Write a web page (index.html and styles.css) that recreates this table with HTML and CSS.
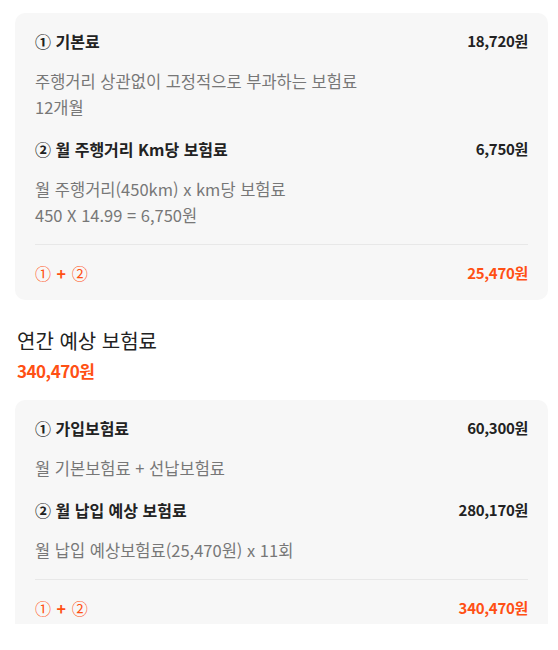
FILE: index.html
```html
<!DOCTYPE html>
<html lang="ko">
<head>
    <meta charset="UTF-8">
    <meta name="viewport" content="width=device-width, initial-scale=1.0">
    <title>보험료 안내</title>
    <link rel="stylesheet" href="styles.css">
</head>
<body>
    <div class="page">
        <div class="card">
            <div class="item">
                <div class="row">
                    <span class="label">① 기본료</span>
                    <span class="amount">18,720원</span>
                </div>
                <p class="desc">주행거리 상관없이 고정적으로 부과하는 보험료<br>12개월</p>
            </div>
            <div class="item">
                <div class="row">
                    <span class="label">② 월 주행거리 Km당 보험료</span>
                    <span class="amount">6,750원</span>
                </div>
                <p class="desc">월 주행거리(450km) x km당 보험료<br>450 X 14.99 = 6,750원</p>
            </div>
            <div class="total">
                <span class="total-label">① <b>+</b> ②</span>
                <span class="amount">25,470원</span>
            </div>
        </div>

        <div class="summary">
            <h2>연간 예상 보험료</h2>
            <div class="summary-price">340,470원</div>
        </div>

        <div class="card">
            <div class="item">
                <div class="row">
                    <span class="label">① 가입보험료</span>
                    <span class="amount">60,300원</span>
                </div>
                <p class="desc">월 기본보험료 + 선납보험료</p>
            </div>
            <div class="item">
                <div class="row">
                    <span class="label">② 월 납입 예상 보험료</span>
                    <span class="amount">280,170원</span>
                </div>
                <p class="desc">월 납입 예상보험료(25,470원) x 11회</p>
            </div>
            <div class="total">
                <span class="total-label">① <b>+</b> ②</span>
                <span class="amount">340,470원</span>
            </div>
        </div>
    </div>
</body>
</html>
```

FILE: styles.css
```css
body {
    margin: 0;
    font-family: "Noto Sans CJK KR", "Noto Sans", sans-serif;
    color: #222;
    background: #fff;
}

.page {
    box-sizing: border-box;
    height: 624px;
    overflow: hidden;
    padding: 13px 10px 0 15px;
}

.card {
    background-color: #f7f7f7;
    border-radius: 10px;
    padding: 17px 20px 16px;
}

.item + .item {
    margin-top: 18px;
}

.row {
    display: flex;
    justify-content: space-between;
    align-items: center;
    font-weight: bold;
    line-height: 22px;
}

.label {
    font-size: 16px;
}

.amount {
    font-size: 15px;
    font-weight: bold;
    letter-spacing: -0.3px;
}

.desc {
    margin: 16px 0 0;
    font-size: 16.5px;
    line-height: 26px;
    color: #777;
}

.total {
    display: flex;
    justify-content: space-between;
    align-items: center;
    margin-top: 16px;
    padding-top: 17px;
    border-top: 1px solid #e8e8e8;
    line-height: 22px;
    color: #ff5014;
}

.total-label {
    font-size: 16px;
    word-spacing: 2px;
}

.summary {
    padding: 27px 2px 18px;
}

.summary h2 {
    margin: 0;
    font-size: 20px;
    font-weight: normal;
    line-height: 28px;
}

.summary-price {
    margin-top: 5px;
    font-size: 17px;
    font-weight: bold;
    line-height: 22px;
    color: #ff5014;
    letter-spacing: -0.5px;
}
```
